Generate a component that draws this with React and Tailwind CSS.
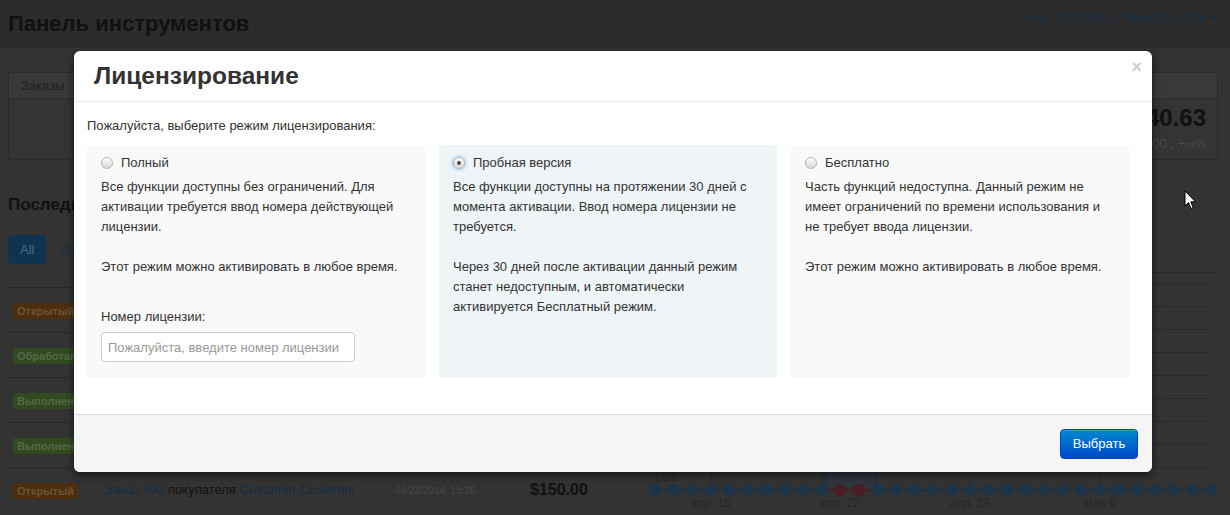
import React from "react";

const ROWS = [
  { id: 97, status: "Открытый", tone: "orange", customer: "Customer Customer", date: "04/25/2014, 11:02", total: "$320.00" },
  { id: 96, status: "Обработан", tone: "green", customer: "Customer Customer", date: "04/24/2014, 18:40", total: "$95.50" },
  { id: 95, status: "Выполнен", tone: "green", customer: "Customer Customer", date: "04/23/2014, 09:12", total: "$210.00" },
  { id: 94, status: "Выполнен", tone: "green", customer: "Customer Customer", date: "04/22/2014, 17:51", total: "$64.90" },
  { id: 93, status: "Открытый", tone: "orange", customer: "Customer Customer", date: "04/22/2014, 15:26", total: "$150.00" },
];

const BADGE = {
  orange: "bg-[#4d2f0e] text-[#6a5338]",
  green: "bg-[#314a1f] text-[#56684b]",
};

const PLANS = [
  {
    id: "full",
    label: "Полный",
    paragraphs: [
      "Все функции доступны без ограничений. Для активации требуется ввод номера действующей лицензии.",
      "Этот режим можно активировать в любое время.",
    ],
    withKey: true,
  },
  {
    id: "trial",
    label: "Пробная версия",
    paragraphs: [
      "Все функции доступны на протяжении 30 дней с момента активации. Ввод номера лицензии не требуется.",
      "Через 30 дней после активации данный режим станет недоступным, и автоматически активируется Бесплатный режим.",
    ],
  },
  {
    id: "free",
    label: "Бесплатно",
    paragraphs: [
      "Часть функций недоступна. Данный режим не имеет ограничений по времени использования и не требует ввода лицензии.",
      "Этот режим можно активировать в любое время.",
    ],
  },
];

function Radio({ checked }) {
  return (
    <span
      className={
        "flex h-[12px] w-[12px] shrink-0 items-center justify-center rounded-full border border-[#b3b3b3] bg-linear-to-b from-white to-[#d9d9d9] " +
        (checked ? "shadow-[0_0_3px_1px_rgba(82,168,236,0.55)]" : "")
      }
    >
      {checked && <span className="h-[4px] w-[4px] rounded-full bg-[#4a4a4a]" />}
    </span>
  );
}

function Chart() {
  const dots = Array.from({ length: 31 }, (_, i) => 7 + i * 18.53);
  const grid = [11, 34, 57, 80, 103, 126, 149, 172, 195];
  const ticks = [
    { x: 63, label: "апр. 15" },
    { x: 192, label: "апр. 22" },
    { x: 322, label: "апр. 29" },
    { x: 452, label: "мая 6" },
  ];
  return (
    <svg width="570" height="243" viewBox="0 0 570 243" className="block">
      <line x1="0" y1="0.5" x2="570" y2="0.5" stroke="#2a2a2a" />
      {grid.map((y) => (
        <line key={y} x1="8" y1={y + 0.5} x2="563" y2={y + 0.5} stroke="#2a2a2a" />
      ))}
      <line x1="8.5" y1="0" x2="8.5" y2="218" stroke="#2a2a2a" />
      {ticks.map((t) => (
        <line key={t.x} x1={t.x + 0.5} y1="0" x2={t.x + 0.5} y2="218" stroke="#2a2a2a" />
      ))}
      <text x="10" y="209" fontSize="11" fill="#262626" fontFamily="Liberation Sans, Arial, sans-serif">
        320
      </text>
      <path d="M175,218 L178,170 L179,120 L222,120 L223,170 L229,218 Z" fill="#2e363e" />
      <path d="M175,218 L178,170 L179,120" stroke="#1c3245" strokeWidth="2" fill="none" />
      <path d="M222,120 L223,170 L229,218" stroke="#1c3245" strokeWidth="2" fill="none" />
      <line x1="7" y1="218" x2="563" y2="218" stroke="#1c3245" strokeWidth="2.5" />
      <line x1="180" y1="218" x2="222" y2="218" stroke="#4a1d24" strokeWidth="2.5" />
      {dots.map((x, i) => (
        <circle key={i} cx={x} cy="218" r="6" fill={i === 10 || i === 11 ? "#4a1d24" : "#1d3346"} />
      ))}
      {ticks.map((t) => (
        <text
          key={t.label}
          x={t.x}
          y="235"
          fontSize="12"
          textAnchor="middle"
          fill="#262626"
          fontFamily="Liberation Sans, Arial, sans-serif"
        >
          {t.label}
        </text>
      ))}
    </svg>
  );
}

function Dashboard() {
  return (
    <div className="h-full bg-[#333333]">
      <div className="flex h-[48px] items-start justify-between bg-[#2c2c2c] pl-[8px] pr-[12px]">
        <h2 className="mt-[11px] text-[22px] font-bold leading-[26px] text-[#111111]">Панель инструментов</h2>
        <div className="mt-[8px] flex items-center gap-[5px] text-[13px] leading-[20px] text-[#132d44]">
          Апр 12, 2014 — Май 12, 2014
          <span className="h-0 w-0 border-x-[4px] border-t-[4px] border-x-transparent border-t-[#132d44]" />
        </div>
      </div>

      <div className="pl-[8px] pr-[12px]">
        <div className="mt-[24px] grid grid-cols-4 gap-[20px]">
          {[
            { title: "Заказы", value: "34", sub: "0 , +∞%" },
            { title: "Продажи", value: "$4 870.00", sub: "$0.00 , +∞%" },
            { title: "Покупатели", value: "12", sub: "0 , +∞%" },
            { title: "Средний чек", value: "$1 240.63", sub: "$0.00 , +∞%" },
          ].map((s) => (
            <div key={s.title} className="h-[88px] overflow-hidden rounded-[4px] border border-[#2b2b2b] bg-[#343434]">
              <div className="h-[26px] border-b border-[#2e2e2e] bg-[#393939] px-[12px] text-[13px] leading-[25px] text-[#1f1f1f]">
                {s.title}
              </div>
              <div className="pr-[11px] pt-[5px] text-right">
                <div className="text-[24px] font-bold leading-[28px] text-[#111111]">{s.value}</div>
                <div className="mt-[2px] text-[13px] leading-[20px] text-[#4a4a4a]">{s.sub}</div>
              </div>
            </div>
          ))}
        </div>

        <h3 className="mt-[35px] text-[17px] font-bold leading-[20px] text-[#111111]">Последние заказы</h3>

        <div className="mt-[20px] flex items-center gap-[2px] text-[13px]">
          <span className="flex h-[29px] items-center rounded-[4px] bg-[#0d3450] px-[12px] text-[#4f6c82]">All</span>
          <span className="px-[12px] text-[#14324a]">Открытые</span>
          <span className="px-[12px] text-[#14324a]">Выполненные</span>
        </div>

        <div className="mt-[8px] flex">
          <div className="w-[640px] pt-[15px]">
            <div className="w-[620px]">
              {ROWS.map((r) => (
                <div key={r.id} className="flex h-[45px] items-center border-t border-[#292929] pl-[5px]">
                  <div className="w-[92px]">
                    <span className={"rounded-[3px] px-[4px] py-[2px] text-[11px] font-bold " + BADGE[r.tone]}>
                      {r.status}
                    </span>
                  </div>
                  <div className="w-[290px] text-[13px] text-[#111111]">
                    <span className="text-[#132d44]">Заказ #{r.id}</span> покупателя{" "}
                    <span className="text-[#132d44]">{r.customer}</span>
                  </div>
                  <div className="w-[135px] text-[10px] text-[#474747]">{r.date}</div>
                  <div className="text-[16px] font-bold text-[#111111]">{r.total}</div>
                </div>
              ))}
            </div>
          </div>
          <Chart />
        </div>
      </div>
    </div>
  );
}

function LicenseModal() {
  return (
    <div className="absolute left-[74px] top-[51px] w-[1078px] overflow-hidden rounded-[6px] bg-white text-[#333333] shadow-[0_3px_8px_rgba(0,0,0,0.6)]">
      <div className="flex h-[51px] justify-between border-b border-[#e8e8e8]">
        <h3 className="self-center pl-[20px] text-[24.5px] font-bold leading-[30px]">Лицензирование</h3>
        <span className="mr-[10px] mt-[4px] text-[18px] font-bold leading-[24px] text-[#cfcfcf]">×</span>
      </div>

      <div className="px-[13px] pb-[36px] pt-[14px] text-[13px] leading-[20px]">
        <p>Пожалуйста, выберите режим лицензирования:</p>
        <div className="mt-[9px] grid grid-cols-[338px_338px_338px] gap-[14px]">
          {PLANS.map((plan) => {
            const selected = plan.id === "trial";
            return (
              <div
                key={plan.id}
                className={"h-[233px] rounded-[4px] px-[14px] pt-[7px] " + (selected ? "bg-[#eff4f7]" : "bg-[#f9f9f9]")}
              >
                <label className="flex h-[20px] items-center gap-[8px] pt-[1px]">
                  <Radio checked={selected} />
                  {plan.label}
                </label>
                <div className="mt-[5px] w-[310px]">
                  {plan.paragraphs.map((p, i) => (
                    <p key={i} className={i > 0 ? "mt-[20px]" : ""}>
                      {p}
                    </p>
                  ))}
                </div>
                {plan.withKey && (
                  <div className="mt-[30px]">
                    <div>Номер лицензии:</div>
                    <input
                      className="mt-[5px] h-[30px] w-[254px] rounded-[4px] border border-[#cccccc] bg-white px-[6px] text-[13px] placeholder:text-[#999999] outline-none"
                      placeholder="Пожалуйста, введите номер лицензии"
                    />
                  </div>
                )}
              </div>
            );
          })}
        </div>
      </div>

      <div className="flex h-[58px] items-center justify-end border-t border-[#dddddd] bg-[#f5f5f5] pr-[14px]">
        <button className="h-[30px] w-[78px] rounded-[4px] border border-[#0044cc] bg-linear-to-b from-[#0088cc] to-[#0044cc] text-[13px] text-white shadow-[inset_0_1px_0_rgba(255,255,255,0.2)]">
          Выбрать
        </button>
      </div>
    </div>
  );
}

export default function App() {
  return (
    <div className="relative h-[515px] w-[1230px] overflow-hidden font-['Liberation_Sans',Arial,sans-serif]">
      <Dashboard />
      <LicenseModal />
      <svg className="absolute left-[1184px] top-[190px]" width="13" height="21" viewBox="0 0 13 21">
        <path d="M1,1 L1,16 L4.5,12.5 L7,18.5 L9.2,17.6 L6.8,11.8 L11.5,11.8 Z" fill="#fff" stroke="#000" strokeWidth="1" />
      </svg>
    </div>
  );
}
